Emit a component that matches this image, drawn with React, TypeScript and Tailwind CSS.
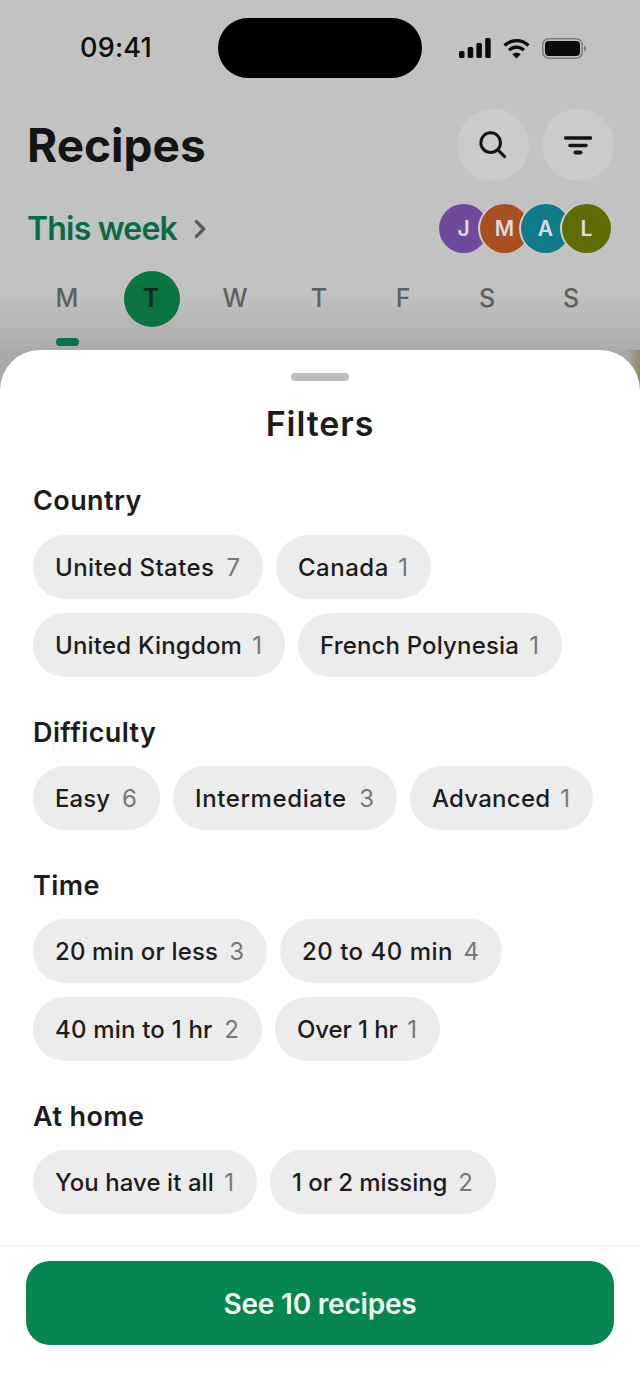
import React from "react";
import { ChevronRight } from "lucide-react";

const font = "font-['Inter','Liberation_Sans',sans-serif]";

type ChipData = [string, number, string, string];

function Chip({ label, count, w, track }: { label: string; count: number; w: string; track: string }) {
  return (
    <div className={`flex h-16 items-center justify-between rounded-full bg-[#ececec] pt-[1px] pl-[22px] pr-[23px] ${w}`}>
      <span className={`text-[24px] font-medium whitespace-nowrap text-[#1c1c1c] ${track}`}>{label}</span>
      <span className="text-[24px] font-normal text-[#767676]">{count}</span>
    </div>
  );
}

function Group({ title, rows, className, gapClass }: { title: string; rows: ChipData[][]; className: string; gapClass: string }) {
  return (
    <section className={className}>
      <h2 className="h-[36px] text-[27px] leading-[36px] font-semibold tracking-[0.4px] text-[#1c1c1c]">{title}</h2>
      <div className={`flex flex-col gap-[14px] ${gapClass}`}>
        {rows.map((r, i) => (
          <div key={i} className="flex gap-[13px]">
            {r.map(([l, c, w, t]) => (
              <Chip key={l} label={l} count={c} w={w} track={t} />
            ))}
          </div>
        ))}
      </div>
    </section>
  );
}

function Avatar({ letter, bg, first }: { letter: string; bg: string; first?: boolean }) {
  return (
    <div className={`flex h-[49px] w-[49px] items-center justify-center rounded-full text-[21px] font-semibold text-[#dcdcdc] ${bg} ${first ? "" : "-ml-[8px] shadow-[-2px_0_0_0_#d5cfcf]"}`}>
      {letter}
    </div>
  );
}

export default function App() {
  const days = ["M", "T", "W", "T", "F", "S", "S"];
  return (
    <div className={`${font} flex h-[1388px] w-[640px] flex-col overflow-hidden bg-gradient-to-r from-[#a9a9a9] from-[98%] to-[#8f8b68]`}>
      <div className="h-[350px] shrink-0 bg-gradient-to-b from-[#c2c2c2] from-[84%] to-[#acacac]">
        <div className="flex h-[78px] pt-[18px]">
          <div className="flex w-[218px] items-center justify-center pl-[14px] text-[27px] font-medium tracking-[0.2px] text-[#0c0c0c]">09:41</div>
          <div className="h-[60px] w-[204px] rounded-[30px] bg-black" />
          <div className="flex flex-1 items-center gap-[12px] pl-[37px]">
            <svg width="32" height="20" viewBox="0 0 32 20" fill="#0a0a0a">
              <rect x="0" y="13" width="5.5" height="7" rx="1.5" />
              <rect x="8.7" y="9" width="5.5" height="11" rx="1.5" />
              <rect x="17.4" y="5" width="5.5" height="15" rx="1.5" />
              <rect x="26.2" y="0" width="5.5" height="20" rx="1.5" />
            </svg>
            <svg width="27" height="21" viewBox="0 0 27 21" fill="none" stroke="#0a0a0a" strokeWidth="3.2">
              <path d="M1.5 7.5C8.5 1 18.5 1 25.5 7.5" />
              <path d="M6 12.2C10.5 8 16.5 8 21 12.2" />
              <path d="M13.5 20.5L9.4 16.3C11.7 14.3 15.3 14.3 17.6 16.3Z" fill="#0a0a0a" stroke="none" />
            </svg>
            <svg width="44" height="21" viewBox="0 0 44 21" fill="none">
              <rect x="0.75" y="0.75" width="39.5" height="19.5" rx="6" stroke="#7a7a7a" strokeWidth="1.5" />
              <rect x="3" y="3" width="35" height="15" rx="4" fill="#0a0a0a" />
              <path d="M42 7.5C43.3 8 44 9 44 10.5C44 12 43.3 13 42 13.5Z" fill="#7a7a7a" />
            </svg>
          </div>
        </div>

        <div className="mt-[31px] flex h-[72px] items-center justify-between pl-[27px] pr-[26px]">
          <h1 className="text-[46px] font-bold text-[#141414]">Recipes</h1>
          <div className="flex gap-[13px]">
            <div className="flex h-[72px] w-[72px] items-center justify-center rounded-full bg-[#cbcbcb]">
              <svg width="28" height="28" viewBox="0 0 30 30" fill="none" stroke="#141414" strokeWidth="3.2" strokeLinecap="round">
                <circle cx="12.5" cy="12.5" r="10.5" />
                <path d="M20.5 20.5L27.5 27.5" />
              </svg>
            </div>
            <div className="flex h-[72px] w-[72px] items-center justify-center rounded-full bg-[#cbcbcb]">
              <svg width="28" height="19" viewBox="0 0 28 19" fill="none" stroke="#141414" strokeLinecap="round">
                <path d="M1.5 2H26.5" strokeWidth="3.4" />
                <path d="M6 9.5H22" strokeWidth="3.4" />
                <path d="M11.5 16.5H16.5" strokeWidth="4" />
              </svg>
            </div>
          </div>
        </div>

        <div className="mt-[23px] flex h-[49px] items-center justify-between pl-[27px] pr-[29px]">
          <div className="flex items-center gap-[8px]">
            <span className="text-[32px] font-semibold tracking-[-0.8px] text-[#0b6a46]">This week</span>
            <ChevronRight size={30} strokeWidth={2.6} color="#5c5c5c" />
          </div>
          <div className="flex">
            <Avatar letter="J" bg="bg-[#6f4a9c]" first />
            <Avatar letter="M" bg="bg-[#a84f22]" />
            <Avatar letter="A" bg="bg-[#0f7a8a]" />
            <Avatar letter="L" bg="bg-[#5f6c06]" />
          </div>
        </div>

        <div className="mt-[18px] grid grid-cols-7 pl-[25px] pr-[27px]">
          {days.map((d, i) => (
            <div key={i} className="flex flex-col items-center">
              <div className={`flex h-[56px] w-[56px] items-center justify-center rounded-full text-[25px] font-medium ${i === 1 ? "ml-[2px] bg-[#0a7440] pr-[2px] font-semibold text-[#082c1c]" : "text-[#5f5f5f]"}`}>
                {d}
              </div>
              {i === 0 && <div className="mt-[11px] h-[8px] w-[23px] rounded-full bg-[#08704a]" />}
            </div>
          ))}
        </div>
      </div>

      <div className="flex flex-1 flex-col rounded-t-[40px] bg-white">
        <div className="mx-auto mt-[23px] h-[8px] w-[58px] rounded-full bg-[#bdbdbd]" />
        <div className="mt-[20px] text-center text-[34px] leading-[46px] font-semibold tracking-[0.9px] text-[#1c1c1c]">Filters</div>

        <div className="px-[33px]">
          <Group className="mt-[36px]" gapClass="mt-[16px]" title="Country" rows={[
            [["United States", 7, "w-[230px]", "tracking-[0.42px]"], ["Canada", 1, "w-[155px]", "tracking-[0.5px]"]],
            [["United Kingdom", 1, "w-[252px]", "tracking-[0.2px]"], ["French Polynesia", 1, "w-[264px]", "tracking-[0.16px]"]],
          ]} />
          <Group className="mt-[38px]" gapClass="mt-[15px]" title="Difficulty" rows={[
            [["Easy", 6, "w-[127px]", "tracking-[0.1px]"], ["Intermediate", 3, "w-[224px]", "tracking-[0.6px]"], ["Advanced", 1, "w-[183px]", "tracking-[0.25px]"]],
          ]} />
          <Group className="mt-[38px]" gapClass="mt-[15px]" title="Time" rows={[
            [["20 min or less", 3, "w-[234px]", "tracking-[0.14px]"], ["20 to 40 min", 4, "w-[222px]", "tracking-[0.5px]"]],
            [["40 min to 1 hr", 2, "w-[229px]", "tracking-[0.2px]"], ["Over 1 hr", 1, "w-[165px]", "tracking-[-0.1px]"]],
          ]} />
          <Group className="mt-[38px]" gapClass="mt-[15px]" title="At home" rows={[
            [["You have it all", 1, "w-[224px]", "tracking-[0.07px]"], ["1 or 2 missing", 2, "w-[226px]", "tracking-[-0.07px]"]],
          ]} />
        </div>

        <div className="mt-[31px] border-t border-[#f0f0f0] px-[26px] pt-[15px]">
          <div className="flex h-[84px] items-center justify-center rounded-[24px] bg-[#05864e] pt-[1px] text-[28px] font-semibold tracking-[-0.2px] text-[#f0faf4]">
            See 10 recipes
          </div>
        </div>
      </div>
    </div>
  );
}
